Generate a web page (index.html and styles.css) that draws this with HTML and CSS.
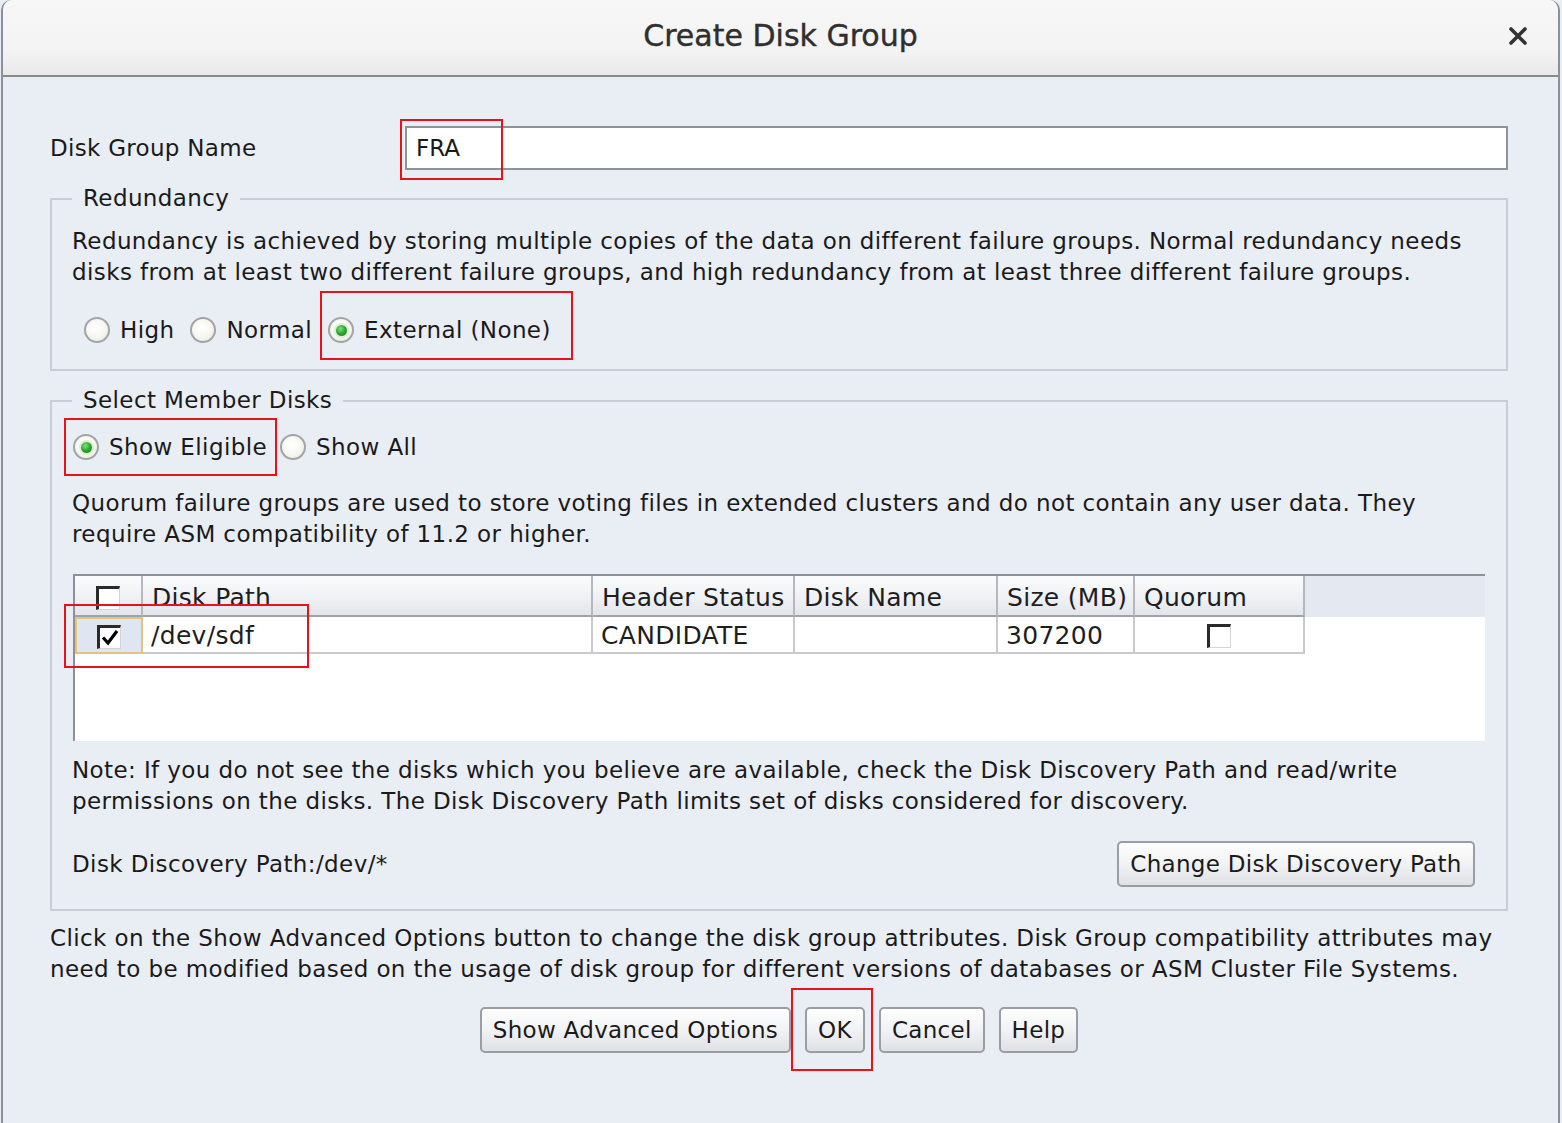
FILE: index.html
```html
<!DOCTYPE html>
<html>
<head>
<meta charset="utf-8">
<link rel="stylesheet" href="styles.css">
<title>Create Disk Group</title>
</head>
<body>
<div class="dialog">
  <div class="titlebar">
    <span class="title">Create Disk Group</span>
    <span class="close"><svg viewBox="0 0 20 20" width="20" height="20"><path d="M3 3 L17 17 M17 3 L3 17" stroke="#333" stroke-width="3.6" stroke-linecap="round"/></svg></span>
  </div>
  <div class="content">
    <div class="name-row">
      <span class="label">Disk Group Name</span>
      <div class="field">FRA</div>
    </div>

    <fieldset class="group group-red">
      <legend>Redundancy</legend>
      <p class="para">Redundancy is achieved by storing multiple copies of the data on different failure groups. Normal redundancy needs<br>disks from at least two different failure groups, and high redundancy from at least three different failure groups.</p>
      <div class="radios radios-red">
        <span class="opt"><span class="radio"></span>High</span>
        <span class="opt"><span class="radio"></span>Normal</span>
        <span class="opt"><span class="radio on"></span>External (None)</span>
      </div>
    </fieldset>

    <fieldset class="group group-disks">
      <legend>Select Member Disks</legend>
      <div class="radios radios-disks">
        <span class="opt"><span class="radio on"></span>Show Eligible</span>
        <span class="opt"><span class="radio"></span>Show All</span>
      </div>
      <p class="para para-q">Quorum failure groups are used to store voting files in extended clusters and do not contain any user data. They<br>require ASM compatibility of 11.2 or higher.</p>

      <div class="table">
        <div class="hcell hcb"><span class="cb"></span></div>
        <div class="hcell">Disk Path</div>
        <div class="hcell">Header Status</div>
        <div class="hcell">Disk Name</div>
        <div class="hcell">Size (MB)</div>
        <div class="hcell">Quorum</div>
        <div class="htail"></div>

        <div class="dcell dcb"><span class="cb checked"><svg viewBox="0 0 20 20" width="20" height="20"><path d="M3 9.5 L8 15 L17 3" fill="none" stroke="#000" stroke-width="3.2"/></svg></span></div>
        <div class="dcell">/dev/sdf</div>
        <div class="dcell">CANDIDATE</div>
        <div class="dcell"></div>
        <div class="dcell">307200</div>
        <div class="dcell dcenter"><span class="cb"></span></div>
        <div class="dtail"></div>
      </div>

      <p class="para para-note">Note: If you do not see the disks which you believe are available, check the Disk Discovery Path and read/write<br>permissions on the disks. The Disk Discovery Path limits set of disks considered for discovery.</p>
      <div class="disc-row">
        <span>Disk Discovery Path:/dev/*</span>
        <button class="btn btn-disc">Change Disk Discovery Path</button>
      </div>
    </fieldset>

    <p class="para para-click">Click on the Show Advanced Options button to change the disk group attributes. Disk Group compatibility attributes may<br>need to be modified based on the usage of disk group for different versions of databases or ASM Cluster File Systems.</p>

    <div class="buttons">
      <button class="btn">Show Advanced Options</button>
      <button class="btn">OK</button>
      <button class="btn">Cancel</button>
      <button class="btn">Help</button>
    </div>
  </div>

  <div class="hl hl-name"></div>
  <div class="hl hl-ext"></div>
  <div class="hl hl-elig"></div>
  <div class="hl hl-row"></div>
  <div class="hl hl-ok"></div>
</div>
</body>
</html>
```

FILE: styles.css
```css
html, body {
  margin: 0;
  padding: 0;
  height: 100%;
}
body {
  background: #e9edf4;
  font-family: "DejaVu Sans", "Liberation Sans", sans-serif;
  font-size: 23px;
  color: #1a1a1a;
  overflow: hidden;
}
.dialog {
  position: relative;
  box-sizing: border-box;
  width: 1559px;
  height: 1123px;
  margin-left: 1px;
  border-left: 2px solid #8c9099;
  border-right: 2px solid #8c9099;
  border-radius: 10px 10px 0 0;
  background: #e9edf4;
}
.titlebar {
  position: relative;
  height: 75px;
  background: linear-gradient(#f8f7f7, #f3f3f3 70%, #e8e8e8);
  border-bottom: 2px solid #8a8a8a;
  border-radius: 10px 10px 0 0;
  display: flex;
  align-items: center;
  justify-content: center;
}
.title {
  font-family: "DejaVu Sans", sans-serif;
  font-size: 30px;
  color: #2f2f2f;
  padding-bottom: 4px;
  -webkit-text-stroke: 0.4px #2f2f2f;
}
.close {
  position: absolute;
  right: 30px;
  top: 26px;
  display: flex;
}
.content {
  padding: 49px 50px 0 47px;
}
.name-row {
  display: flex;
  align-items: center;
  height: 44px;
}
.label {
  width: 355px;
  letter-spacing: 0.3px;
}
.field {
  flex: 1;
  box-sizing: border-box;
  height: 44px;
  background: #fff;
  border: 2px solid #8f9298;
  padding-left: 9px;
  line-height: 40px;
}
.group {
  margin: 12px 0 0 0;
  border: 2px solid #c9cdd5;
  padding: 0 21px 0 20px;
  min-width: 0;
}
.group legend {
  padding: 0 11px;
  line-height: 31px;
  letter-spacing: 0.4px;
}
.group-red {
  margin-top: 13px;
  padding-bottom: 19px;
}
.para {
  margin: 0;
  line-height: 31px;
  letter-spacing: 0.4px;
  white-space: nowrap;
}
.group-red .para {
  margin-top: 12px;
}
.radios {
  display: flex;
  align-items: center;
  height: 40px;
  letter-spacing: 0.4px;
}
.radios-red {
  margin-top: 22px;
  padding-left: 12px;
  gap: 16px;
}
.radios-disks {
  margin-top: 11px;
  padding-left: 1px;
  gap: 13px;
}
.opt {
  display: flex;
  align-items: center;
  gap: 10px;
}
.radio {
  box-sizing: border-box;
  width: 26px;
  height: 26px;
  border-radius: 50%;
  border: 2px solid #a2a4a6;
  background: radial-gradient(circle at 45% 40%, #ffffff 0%, #f6f6f0 55%, #e2e2da 100%);
  display: flex;
  align-items: center;
  justify-content: center;
}
.radio.on::after {
  content: "";
  width: 11px;
  height: 11px;
  border-radius: 50%;
  background: radial-gradient(circle at 40% 35%, #7ee07e 0%, #2ea52e 50%, #187a18 100%);
  box-shadow: 0 0 0 2px #d9f0d4;
}
.group-disks {
  margin-top: 14px;
  padding-bottom: 22px;
}
.para-q {
  margin-top: 21px;
}
.table {
  margin-top: 24px;
  margin-left: 1px;
  height: 167px;
  box-sizing: border-box;
  border-top: 2px solid #8d9099;
  border-left: 2px solid #8d9099;
  background: #fff;
  display: grid;
  grid-template-columns: 68px 450px 202px 203px 137px 170px 1fr;
  grid-template-rows: 41px 37px;
  align-content: start;
  font-family: "DejaVu Sans", sans-serif;
  font-size: 25px;
  letter-spacing: 0.3px;
  color: #1e1e1e;
}
.hcell {
  box-sizing: border-box;
  background: linear-gradient(#fafbfc, #eef0f4 60%, #e2e5ea);
  border-right: 2px solid #b4b8bf;
  border-bottom: 2px solid #9ea2aa;
  padding-left: 9px;
  display: flex;
  align-items: center;
  padding-top: 4px;
}
.hcb {
  justify-content: center;
  padding-left: 0;
}
.htail {
  background: #e4e8f0;
}
.dcell {
  box-sizing: border-box;
  border-right: 2px solid #c8cacd;
  border-bottom: 2px solid #c8cacd;
  padding-left: 8px;
  padding-top: 2px;
  display: flex;
  align-items: center;
  background: #fff;
}
.dcb {
  justify-content: center;
  padding-left: 0;
  background: #dfe6f1;
  border: 2px solid #e6c27c;
}
.dcenter {
  justify-content: center;
  padding-left: 0;
}
.dtail {
  background: #fff;
}
.cb {
  box-sizing: border-box;
  width: 24px;
  height: 24px;
  background: #fff;
  border-top: 3px solid #2a2a2a;
  border-left: 3px solid #2a2a2a;
  border-right: 1px solid #d4d4d4;
  border-bottom: 1px solid #d4d4d4;
  display: flex;
  align-items: center;
  justify-content: center;
}
.cb svg {
  display: block;
}
.para-note {
  margin-top: 14px;
}
.disc-row {
  margin-top: 24px;
  display: flex;
  align-items: center;
  justify-content: space-between;
  padding-right: 10px;
  letter-spacing: 0.4px;
}
.btn {
  box-sizing: border-box;
  height: 46px;
  padding: 0 11px;
  font-family: "DejaVu Sans", "Liberation Sans", sans-serif;
  font-size: 23px;
  letter-spacing: 0.3px;
  color: #1a1a1a;
  background: linear-gradient(#fefefe, #f1f2f4 50%, #dfe1e5);
  border: 2px solid #9a9da3;
  border-radius: 5px;
}
.btn-disc {
  width: 358px;
}
.para-click {
  margin-top: 12px;
}
.buttons {
  margin-top: 22px;
  display: flex;
  justify-content: center;
  gap: 14px;
}
.hl {
  position: absolute;
  box-sizing: border-box;
  border: 2px solid #e8121a;
}
.hl-name { left: 397px; top: 119px; width: 103px; height: 61px; }
.hl-ext { left: 317px; top: 291px; width: 253px; height: 69px; }
.hl-elig { left: 61px; top: 418px; width: 213px; height: 58px; }
.hl-row { left: 61px; top: 604px; width: 245px; height: 64px; }
.hl-ok { left: 788px; top: 988px; width: 82px; height: 83px; }
```
